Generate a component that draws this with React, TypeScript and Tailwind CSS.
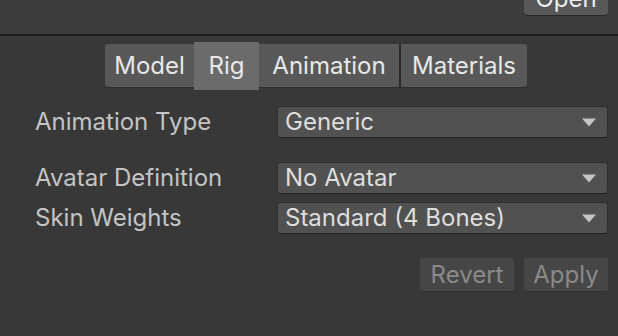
import { ReactNode } from 'react';

const tabs = [
  { name: 'Model', w: 'w-[89px]', active: false },
  { name: 'Rig', w: 'w-[65px]', active: true },
  { name: 'Animation', w: 'w-[140px]', active: false },
  { name: 'Materials', w: 'w-[128px]', active: false },
];

function Dropdown({ value }: { value: string }) {
  return (
    <div className="w-[331px] h-[32px] flex items-center justify-between pl-[7px] pr-[11px] bg-[#515151] rounded-[3px] border border-[#303030] border-b-[#242424] text-[24px] text-[#dedede]">
      <span className="leading-none">{value}</span>
      <svg width="14" height="9" viewBox="0 0 14 9">
        <path d="M0 0.5 L14 0.5 L7 8.5 Z" fill="#c4c4c4" />
      </svg>
    </div>
  );
}

function Row({ label, children, className = '' }: { label: string; children: ReactNode; className?: string }) {
  return (
    <div className={`flex items-center ${className}`}>
      <div className="w-[277px] pl-[35px] text-[24px] text-[#c4c4c4] leading-none">{label}</div>
      {children}
    </div>
  );
}

export default function App() {
  return (
    <div
      className="w-[618px] h-[336px] overflow-hidden bg-[#383838] flex flex-col"
      style={{ fontFamily: 'Inter, "Noto Sans", sans-serif' }}
    >
      <div className="h-[34px] bg-[#3c3c3c] flex justify-end pr-[10px]">
        <div className="mt-[-18px] w-[84px] h-[34px] rounded-[4px] bg-[#585858] border-b border-[#262626] flex items-center justify-center text-[24px] text-[#eeeeee]">
          Open
        </div>
      </div>
      <div className="h-[2px] bg-[#1e1e1e]" />

      <div className="flex pl-[105px] pt-[8px]">
        <div className="flex h-[44px]">
          {tabs.map((t, i) => (
            <div
              key={t.name}
              className={`${t.w} flex items-center justify-center text-[24px] text-[#e8e8e8] ${
                t.active ? 'bg-[#6b6b6b] -my-[2px]' : 'bg-[#585858] border-b border-[#2e2e2e]'
              } ${i === 0 ? 'rounded-l-[4px]' : ''} ${i === tabs.length - 1 ? 'rounded-r-[4px] border-l-2 border-l-[#2a2a2a]' : ''}`}
            >
              {t.name}
            </div>
          ))}
        </div>
      </div>

      <Row label="Animation Type" className="mt-[18px]">
        <Dropdown value="Generic" />
      </Row>
      <Row label="Avatar Definition" className="mt-[24px]">
        <Dropdown value="No Avatar" />
      </Row>
      <Row label="Skin Weights" className="mt-[8px]">
        <Dropdown value="Standard (4 Bones)" />
      </Row>

      <div className="flex justify-end gap-[10px] pr-[10px] mt-[24px]">
        <div className="w-[94px] h-[34px] rounded-[3px] bg-[#464646] border-b border-[#2e2e2e] flex items-center justify-center text-[24px] text-[#8a8a8a]">
          Revert
        </div>
        <div className="w-[84px] h-[34px] rounded-[3px] bg-[#464646] border-b border-[#2e2e2e] flex items-center justify-center text-[24px] text-[#8a8a8a]">
          Apply
        </div>
      </div>
    </div>
  );
}
